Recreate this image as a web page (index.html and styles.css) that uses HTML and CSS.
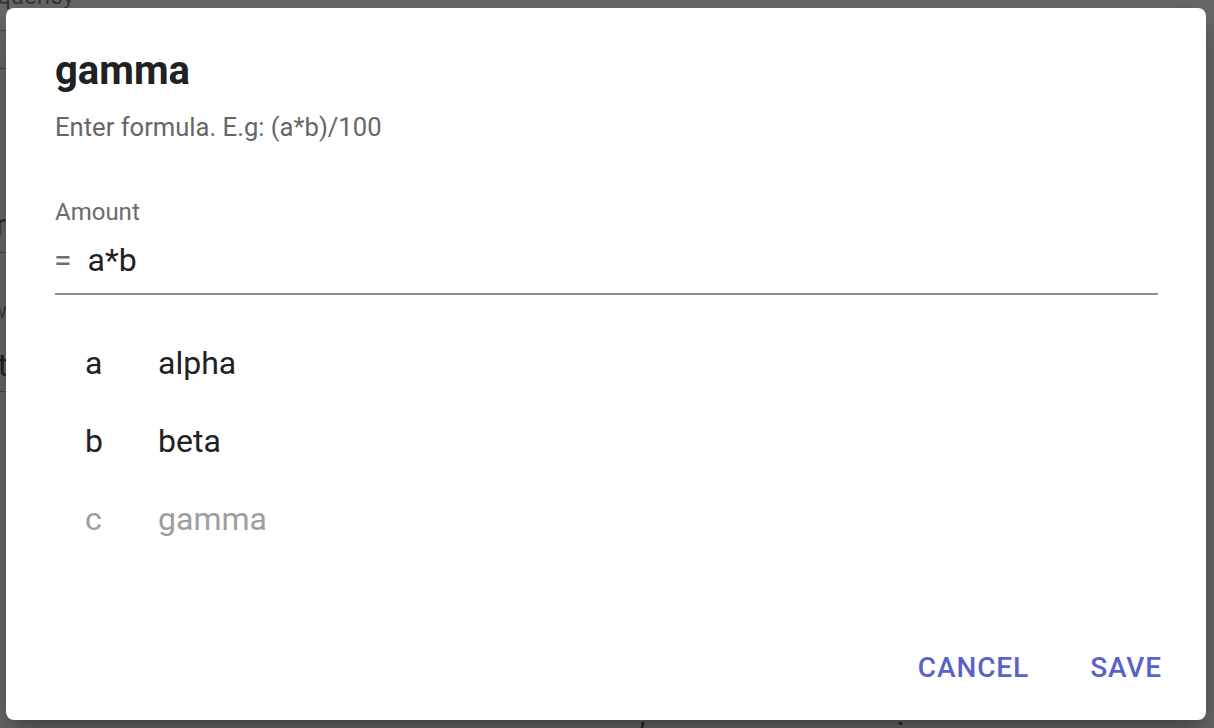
FILE: index.html
```html
<!DOCTYPE html>
<html lang="en">
<head>
<meta charset="utf-8">
<title>Formula dialog</title>
<link rel="stylesheet" href="styles.css">
</head>
<body>
  <div class="bg-page">
    <div class="bg-row bg-row-a"><div class="bg-text bg-freq">Frequency</div></div>
    <div class="bg-row bg-row-b"></div>
    <div class="bg-row bg-row-c"><div class="bg-text bg-value">Monthly r</div></div>
    <div class="bg-row bg-row-d">
      <div class="bg-text bg-small">Show</div>
      <div class="bg-text bg-value2">Text</div>
    </div>
    <div class="bg-bottom"><span class="bg-mark">,</span><span class="bg-dot">.</span></div>
  </div>

  <div class="backdrop">
    <div class="dialog" role="dialog" aria-labelledby="dlg-title">
      <h2 class="dialog-title" id="dlg-title">gamma</h2>
      <p class="dialog-text">Enter formula. E.g: (a*b)/100</p>

      <div class="field">
        <label class="field-label" for="formula">Amount</label>
        <div class="field-input">
          <span class="adornment">=</span>
          <span class="input-value" id="formula">a*b</span>
        </div>
      </div>

      <ul class="var-list">
        <li class="var-row"><span class="var-key">a</span><span class="var-name">alpha</span></li>
        <li class="var-row"><span class="var-key">b</span><span class="var-name">beta</span></li>
        <li class="var-row disabled"><span class="var-key">c</span><span class="var-name">gamma</span></li>
      </ul>

      <div class="actions">
        <button class="btn">Cancel</button>
        <button class="btn">Save</button>
      </div>
    </div>
  </div>
</body>
</html>
```

FILE: styles.css
```css
* { box-sizing: border-box; }

html, body {
  margin: 0;
  padding: 0;
  width: 1214px;
  height: 728px;
  overflow: hidden;
  background: #6b6b6b;
  font-family: Roboto, "Noto Sans", "Liberation Sans", sans-serif;
}

/* page underneath the backdrop */
.bg-page {
  width: 1214px;
  height: 728px;
  display: flex;
  flex-direction: column;
}
.bg-row {
  width: 300px;
  border-bottom: 1px solid #4e4e4e;
  display: flex;
  flex-direction: column;
}
.bg-row-a { height: 31px; }
.bg-row-b { height: 38px; }
.bg-row-c { height: 185px; }
.bg-row-d { height: 139px; }
.bg-text {
  width: 300px;
  text-align: right;
  white-space: nowrap;
}
.bg-freq {
  margin-left: -226px;
  margin-top: -16px;
  font-size: 24px;
  line-height: 24px;
  color: #383838;
}
.bg-value {
  margin-left: -294px;
  margin-top: 138px;
  font-size: 30px;
  line-height: 36px;
  color: #2c2c2c;
}
.bg-small {
  margin-left: -293px;
  margin-top: 46px;
  font-size: 22px;
  line-height: 24px;
  color: #404040;
}
.bg-value2 {
  margin-left: -292px;
  margin-top: 22px;
  font-size: 32px;
  line-height: 40px;
  color: #262626;
}
.bg-bottom {
  margin-top: 316px;
  display: flex;
  gap: 252px;
  padding-left: 640px;
  color: #262626;
  font-size: 22px;
  line-height: 20px;
  font-weight: 700;
}

/* overlay */
.backdrop {
  position: absolute;
  inset: 0;
}

.dialog {
  position: absolute;
  left: 6px;
  top: 8px;
  width: 1200px;
  height: 712px;
  background: #fff;
  border-radius: 8px;
  box-shadow: 0 11px 15px -7px rgba(0,0,0,0.2), 0 24px 38px 3px rgba(0,0,0,0.14), 0 9px 46px 8px rgba(0,0,0,0.12);
  padding: 39px 48px 0 49px;
  display: flex;
  flex-direction: column;
  color: #212121;
}

.dialog-title {
  margin: 0;
  font-size: 40px;
  line-height: 48px;
  font-weight: 700;
  color: #212121;
}

.dialog-text {
  margin: 16px 0 0;
  font-size: 25.6px;
  line-height: 32px;
  color: #666;
}

.field {
  margin-top: 55px;
  border-bottom: 2px solid #8d8d8d;
  padding-bottom: 13px;
}
.field-label {
  display: block;
  font-size: 24px;
  line-height: 28px;
  color: #6b6b6b;
}
.field-input {
  margin-top: 14px;
  display: flex;
  align-items: baseline;
  font-size: 32px;
  line-height: 40px;
  color: #212121;
}
.adornment {
  color: #6f6f6f;
  font-size: 32px;
  margin-left: -1px;
  margin-right: 16px;
}

.var-list {
  list-style: none;
  margin: 29px 0 0;
  padding: 0;
}
.var-row {
  display: flex;
  align-items: baseline;
  height: 78px;
  font-size: 32px;
  line-height: 78px;
  color: #212121;
}
.var-key {
  width: 103px;
  padding-left: 30px;
}
.var-row.disabled { color: #9e9e9e; }

.actions {
  margin: auto -48px 0 0;
  display: flex;
  justify-content: flex-end;
  padding: 0 28px 34px 0;
}
.btn {
  font-family: Roboto, "Noto Sans", "Liberation Sans", sans-serif;
  font-size: 28px;
  line-height: 36px;
  font-weight: 500;
  letter-spacing: 0.9px;
  text-transform: uppercase;
  color: #5b62c7;
  background: none;
  border: 0;
  padding: 0 16px;
  margin-left: 29px;
  cursor: pointer;
}
```
